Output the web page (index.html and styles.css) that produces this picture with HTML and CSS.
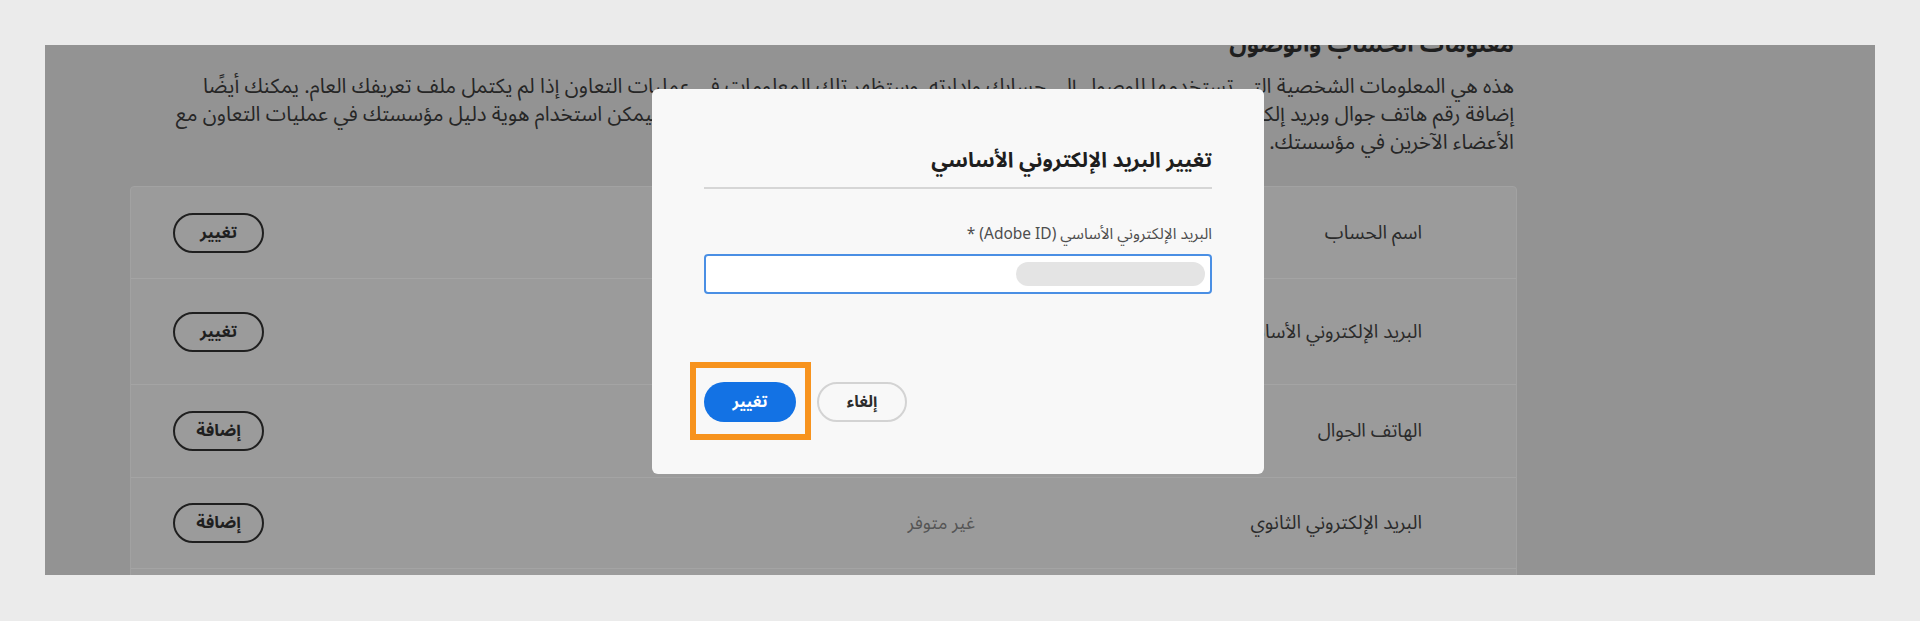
FILE: index.html
```html
<!DOCTYPE html>
<html lang="ar" dir="rtl">
<head>
<meta charset="utf-8">
<title>معلومات الحساب والوصول</title>
<link rel="stylesheet" href="styles.css">
</head>
<body>
<div class="frame">
  <div class="screen">
    <main class="page">
      <h1 class="page-title">معلومات الحساب والوصول</h1>
      <p class="intro">هذه هي المعلومات الشخصية التي تستخدمها للوصول إلى حسابك وإدارته. وستظهر تلك المعلومات في عمليات التعاون إذا لم يكتمل ملف تعريفك العام. يمكنك أيضًا<br>إضافة رقم هاتف جوال وبريد إلكتروني ثانوي إلى حسابك. وإذا كانت لديك هوية المؤسسة أو الهوية الاتحادية، فيمكن استخدام هوية دليل مؤسستك في عمليات التعاون مع<br>الأعضاء الآخرين في مؤسستك.</p>
      <section class="card">
        <div class="row row-1">
          <div class="label">اسم الحساب</div>
          <div class="value"></div>
          <button class="btn-outline">تغيير</button>
        </div>
        <div class="row row-2">
          <div class="label">البريد الإلكتروني الأساسي</div>
          <div class="value"></div>
          <button class="btn-outline">تغيير</button>
        </div>
        <div class="row row-3">
          <div class="label">الهاتف الجوال</div>
          <div class="value"></div>
          <button class="btn-outline">إضافة</button>
        </div>
        <div class="row row-4">
          <div class="label">البريد الإلكتروني الثانوي</div>
          <div class="value">غير متوفر</div>
          <button class="btn-outline">إضافة</button>
        </div>
        <div class="row row-5">
          <div class="label">كلمة المرور</div>
          <div class="value"></div>
          <button class="btn-outline">تغيير</button>
        </div>
      </section>
    </main>

    <div class="dialog" role="dialog">
      <h2 class="dialog-title">تغيير البريد الإلكتروني الأساسي</h2>
      <div class="divider"></div>
      <label class="field-label">البريد الإلكتروني الأساسي (Adobe ID) *</label>
      <div class="field">
        <span class="redacted"></span>
      </div>
      <div class="dialog-actions">
        <button class="btn-secondary">إلغاء</button>
        <button class="btn-primary">تغيير</button>
      </div>
    </div>
  </div>
</div>
</body>
</html>
```

FILE: styles.css
```css
html, body {
  margin: 0;
  padding: 0;
}

body {
  width: 1920px;
  height: 621px;
  overflow: hidden;
  background: #ebebeb;
  font-family: "Noto Sans Arabic", "Noto Kufi Arabic", "DejaVu Sans", sans-serif;
  color: #2c2c2c;
}

.frame {
  padding: 45px;
}

.screen {
  position: relative;
  height: 530px;
  overflow: hidden;
  background: #939393;
}

.page {
  width: 1387px;
  margin-left: 85px;
  margin-right: auto;
  margin-top: -16px;
}

.page-title {
  margin: 0 0 12px;
  padding-right: 3px;
  font-size: 24px;
  line-height: 32px;
  font-weight: 700;
  color: #1f1f1f;
}

.intro {
  margin: 0;
  padding-right: 3px;
  font-size: 20.5px;
  line-height: 28px;
  color: #262626;
  white-space: nowrap;
}

.card {
  margin-top: 29px;
  background: #9b9b9b;
  border: 1px solid #a2a2a2;
  border-radius: 4px;
}

.row {
  display: grid;
  grid-template-columns: 447px 1fr auto;
  align-items: center;
  padding: 0 94px 0 42px;
  border-bottom: 1px solid #a4a4a4;
  box-sizing: border-box;
}

.row-1 { height: 92px; }
.row-2 { height: 106px; }
.row-3 { height: 93px; }
.row-4 { height: 91px; }
.row-5 { height: 92px; }

.label {
  font-size: 19px;
  color: #2b2b2b;
}

.value {
  font-size: 18px;
  color: #555555;
}

.btn-outline {
  width: 91px;
  height: 40px;
  border: 2px solid #1f1f1f;
  border-radius: 20px;
  background: transparent;
  font-family: inherit;
  font-size: 17px;
  font-weight: 700;
  color: #1f1f1f;
  padding: 0;
}

.dialog {
  position: absolute;
  left: 607px;
  top: 44px;
  width: 612px;
  height: 385px;
  box-sizing: border-box;
  padding: 56px 52px 52px;
  background: #f8f8f8;
  border-radius: 6px;
  display: flex;
  flex-direction: column;
}

.dialog-title {
  margin: 0;
  font-size: 21px;
  line-height: 30px;
  font-weight: 700;
  color: #1e1e1e;
}

.divider {
  margin-top: 12px;
  height: 2px;
  background: #d6d6d6;
}

.field-label {
  margin-top: 35px;
  font-size: 15.5px;
  line-height: 20px;
  color: #4e4e4e;
}

.field {
  margin-top: 10px;
  height: 40px;
  box-sizing: border-box;
  border: 2px solid #4a8fe4;
  border-radius: 4px;
  background: #ffffff;
  display: flex;
  align-items: center;
  padding-right: 5px;
}

.redacted {
  width: 189px;
  height: 24px;
  border-radius: 12px;
  background: #e4e4e4;
}

.dialog-actions {
  margin-top: auto;
  display: flex;
  justify-content: flex-end;
  gap: 21px;
}

.btn-secondary {
  min-width: 90px;
  height: 40px;
  padding: 0 20px;
  border: 2px solid #d3d3d3;
  border-radius: 20px;
  background: #f8f8f8;
  font-family: inherit;
  font-size: 16px;
  font-weight: 700;
  color: #2c2c2c;
}

.btn-primary {
  position: relative;
  width: 92px;
  height: 40px;
  padding: 0;
  border: none;
  border-radius: 20px;
  background: #1372e4;
  font-family: inherit;
  font-size: 16px;
  font-weight: 700;
  color: #ffffff;
}

.btn-primary::after {
  content: "";
  position: absolute;
  top: -20px;
  bottom: -18px;
  left: -14px;
  right: -15px;
  border: 6px solid #f7931e;
  pointer-events: none;
}
```
